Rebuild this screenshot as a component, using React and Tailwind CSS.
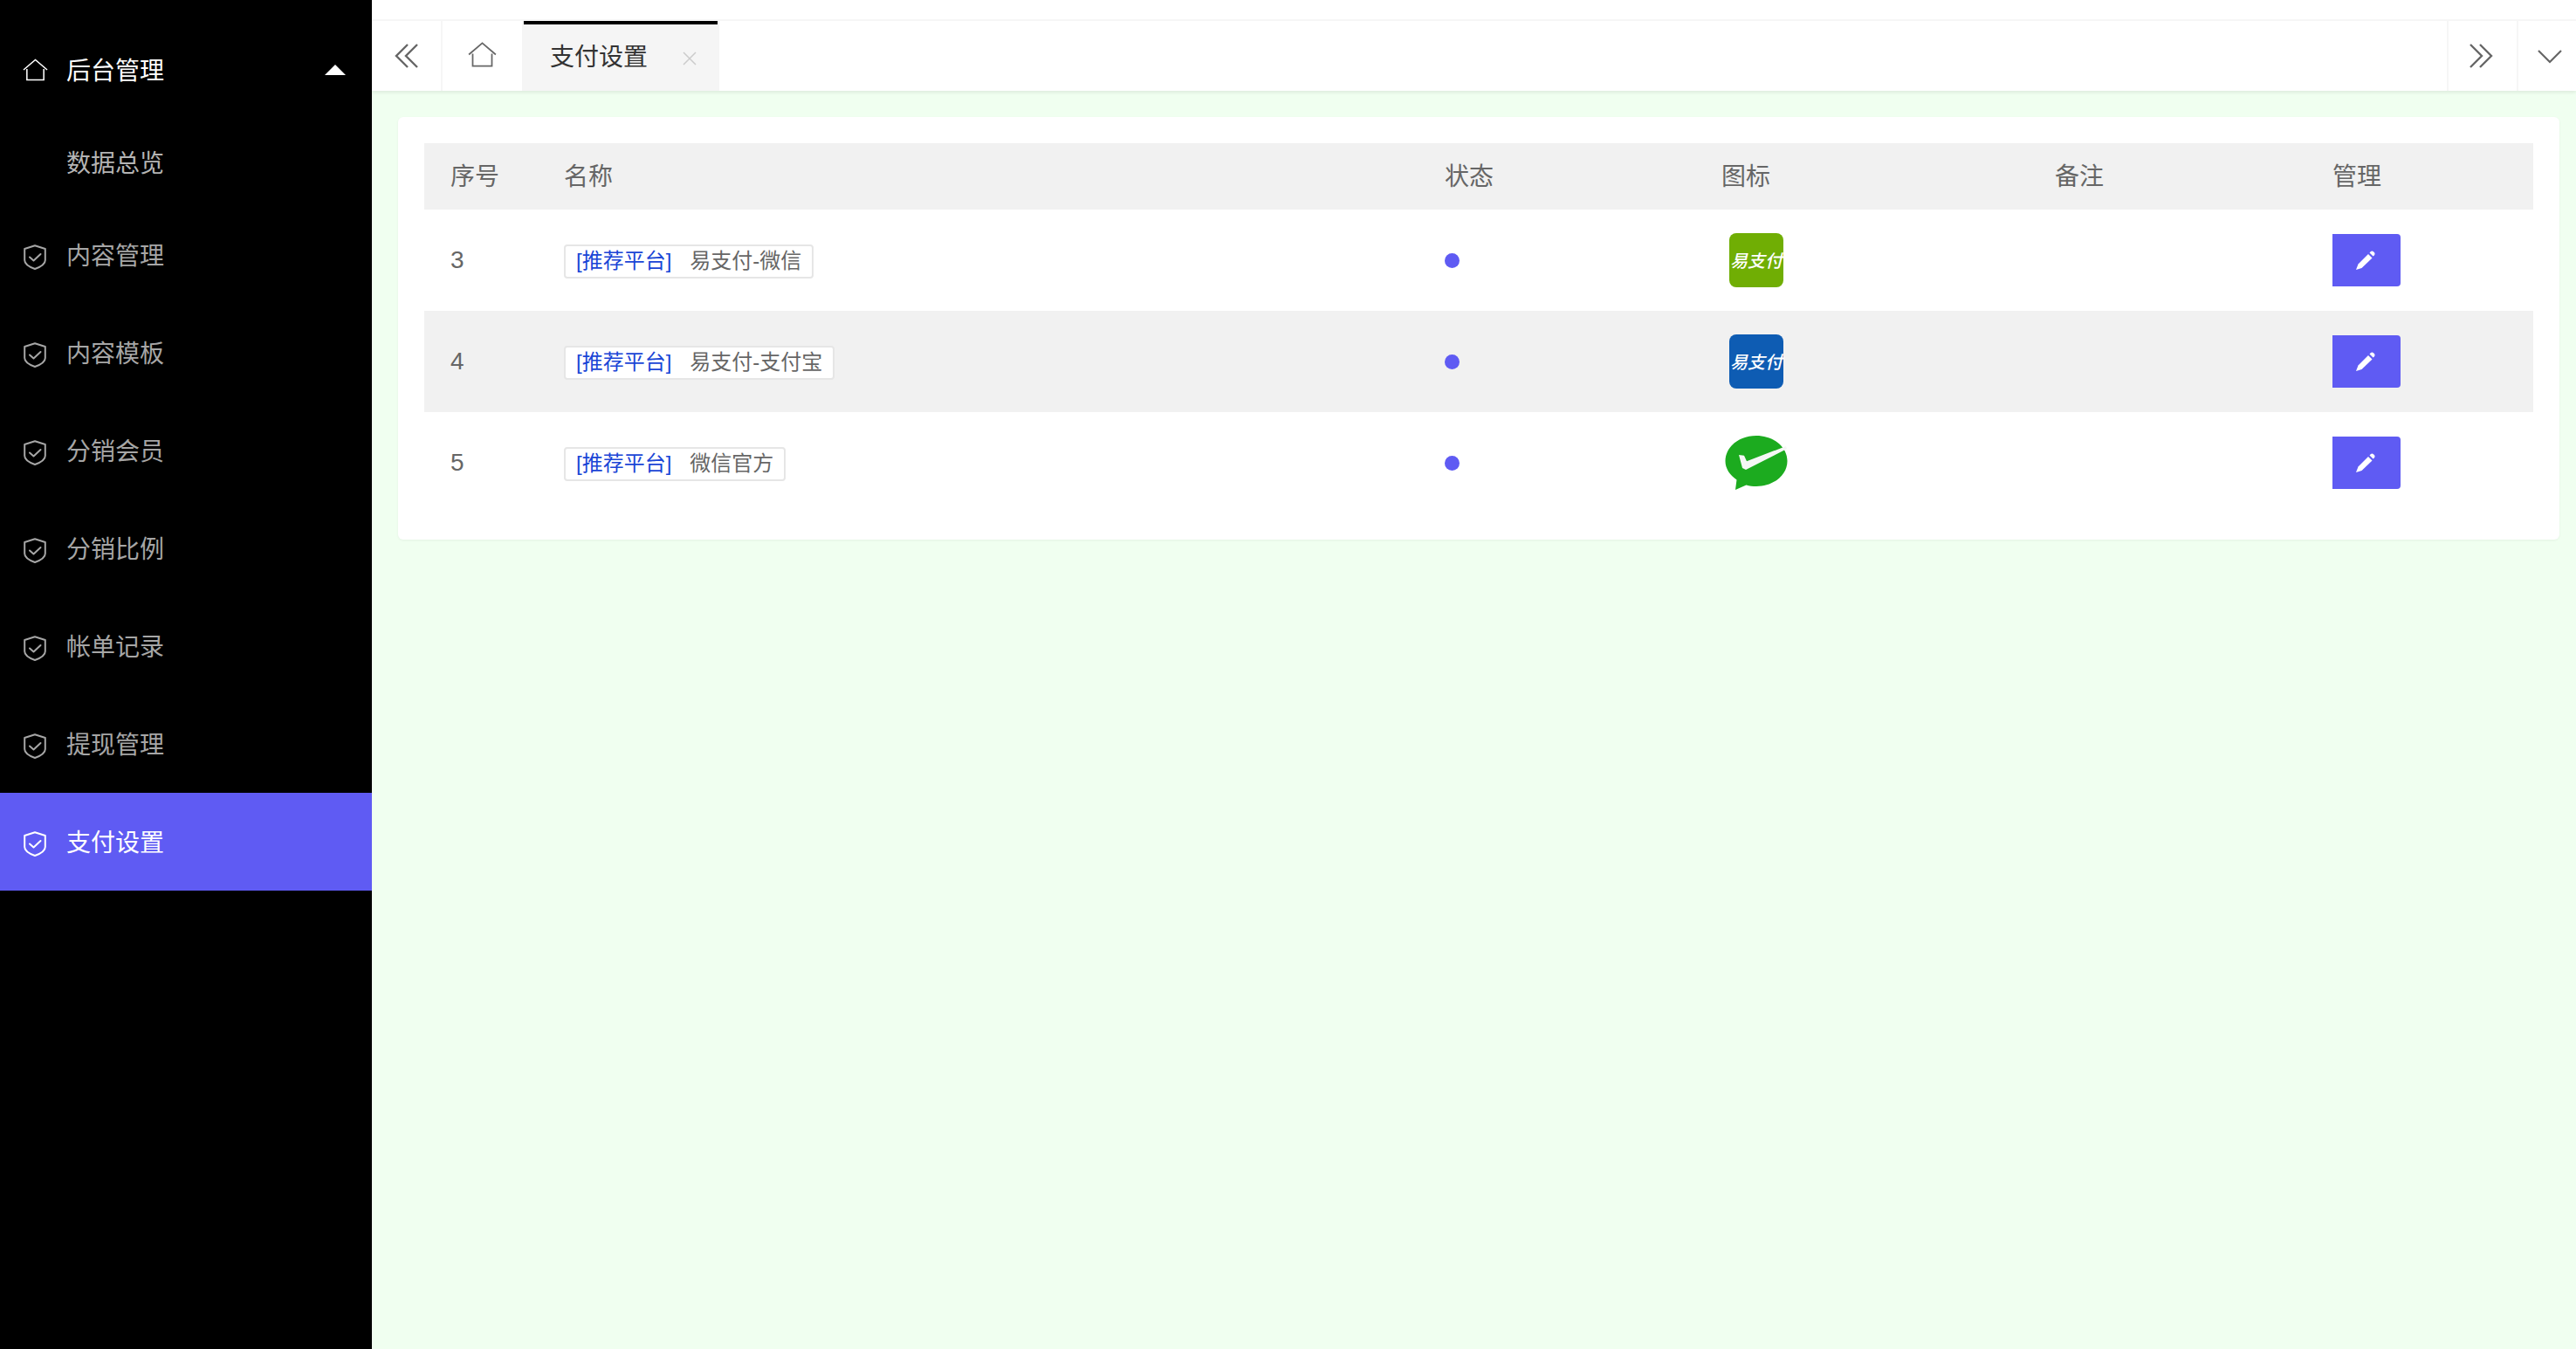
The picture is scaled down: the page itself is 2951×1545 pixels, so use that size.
import React from 'react';

const FONT = { fontFamily: '"Liberation Sans", "Noto Sans CJK SC", sans-serif' };

const HomeIcon = ({ className }) => (
  <svg viewBox="0 0 30 26" fill="none" stroke="currentColor" strokeWidth="1.6" className={className}>
    <path d="M1 13 15 1l14 12" />
    <path d="M5 12v13h20V12" />
  </svg>
);

const ShieldIcon = ({ className }) => (
  <svg viewBox="0 0 26 29" fill="none" stroke="currentColor" strokeWidth="2" className={className}>
    <path d="M13 1.2 24.8 5v13c0 4-5 7.600-11.800 10C6.200 25.600 1.200 22 1.200 18V5z" strokeLinejoin="round" />
    <path d="m7 14.500 4.500 4 8-7.500" strokeLinecap="round" strokeLinejoin="round" />
  </svg>
);

const DoubleChevron = ({ className, flip }) => (
  <svg viewBox="0 0 28 28" fill="none" stroke="currentColor" strokeWidth="2.4" className={className}>
    {flip ? <path d="M2 1l13 13L2 27M13 1l13 13-13 13" /> : <path d="M15 1 2 14l13 13M26 1 13 14l13 13" />}
  </svg>
);

// 메뉴 목록
const menus = ['内容管理', '内容模板', '分销会员', '分销比例', '帐单记录', '提现管理'];

const Sidebar = () => (
  <aside className="w-[426px] shrink-0 bg-black pt-6 text-[28px]">
    <div className="flex h-[112px] items-center pl-[26px] pr-[30px] text-white">
      <HomeIcon className="h-[26px] w-[29px] shrink-0" />
      <span className="mt-[4px] ml-[21px]">后台管理</span>
      <span className="ml-auto h-0 w-0 border-x-[12px] border-b-[12px] border-x-transparent border-b-white" />
    </div>
    <div className="flex h-[100px] items-center pt-[3px] pl-[76px] text-[#b4b4b4]">数据总览</div>
    {menus.map((name) => (
      <div key={name} className="flex h-[112px] items-center pt-[4px] pl-[27px] text-[#a6a6a6]">
        <ShieldIcon className="h-[29px] w-[26px] shrink-0" />
        <span className="-mt-[1px] ml-[23px]">{name}</span>
      </div>
    ))}
    <div className="flex h-[112px] items-center bg-[#5f5bf3] pt-[4px] pl-[27px] text-white">
      <ShieldIcon className="h-[29px] w-[26px] shrink-0" />
      <span className="-mt-[1px] ml-[23px]">支付设置</span>
    </div>
  </aside>
);

const TabBar = () => (
  <header className="relative shrink-0 bg-white shadow-[0_2px_4px_rgba(0,0,0,0.08)]">
    <div className="h-[24px] border-b-2 border-[#f6f6f6]" />
    <div className="flex h-[80px] items-stretch text-[#666]">
      <div className="flex w-[81px] items-center justify-center border-r-2 border-[#f6f6f6]">
        <DoubleChevron className="h-[28px] w-[28px]" />
      </div>
      <div className="flex w-[91px] items-center justify-center">
        <HomeIcon className="mb-[3px] h-[29px] w-[33px]" />
      </div>
      <div className="relative flex w-[226px] items-center bg-[#f5f5f5] pt-[3px] pl-[32px] text-[28px] text-[#333]">
        <span className="absolute inset-x-[2px] top-0 h-[4px] bg-black" />
        支付设置
        <svg viewBox="0 0 16 16" stroke="#ccc" strokeWidth="1.500" className="mt-[2px] ml-[40px] h-[16px] w-[16px]">
          <path d="m1 1 14 14M15 1 1 15" />
        </svg>
      </div>
      <div className="ml-auto flex w-[80px] items-center justify-center border-l-2 border-[#f6f6f6] pr-[4px]">
        <DoubleChevron flip className="h-[28px] w-[28px]" />
      </div>
      <div className="flex w-[68px] items-center justify-center border-l-2 border-[#f6f6f6] pl-[6px]">
        <svg viewBox="0 0 28 16" fill="none" stroke="currentColor" strokeWidth="2.200" className="mt-[2px] h-[16px] w-[28px]">
          <path d="m1 1 13 13L27 1" />
        </svg>
      </div>
    </div>
  </header>
);

const PayLogo = ({ color }) => (
  <div className="ml-[9px] flex h-[62px] w-[62px] items-center justify-center rounded-[8px] pt-[2px] text-[20px] font-medium whitespace-nowrap text-white italic" style={{ backgroundColor: color }}>
    易支付
  </div>
);

const WechatLogo = () => (
  <svg viewBox="0 0 72 62" className="ml-[4px] h-[62px] w-[72px]">
    <path d="M36 0c20 0 35.500 13 35.500 29S56 58 36 58c-4 0-8-.6-11.500-1.600L12 62l1.500-11.500C5.500 45 .5 37.500.5 29 .5 13 16 0 36 0z" fill="#1cab1f" />
    <path d="M16 22l6 .8 3 6.500L70 12l1 3-47 24-4-2z" fill="#f5f7f5" />
  </svg>
);

const rows = [
  { id: 3, name: '易支付-微信', logo: <PayLogo color="#70ae04" /> },
  { id: 4, name: '易支付-支付宝', logo: <PayLogo color="#0e5cb3" /> },
  { id: 5, name: '微信官方', logo: <WechatLogo /> },
];

const PayTable = () => (
  <table className="w-full table-fixed border-collapse text-[#666]">
    <thead>
      <tr className="h-[76px] bg-[#f1f1f1] text-left text-[28px]">
        <th className="w-[131px] pt-[2px] pl-[30px] font-normal">序号</th>
        <th className="w-[1009px] pt-[2px] pl-[29px] font-normal">名称</th>
        <th className="w-[316px] pt-[2px] pl-[29px] font-normal">状态</th>
        <th className="w-[382px] pt-[2px] pl-[30px] font-normal">图标</th>
        <th className="w-[319px] pt-[2px] pl-[30px] font-normal">备注</th>
        <th className="pt-[2px] pl-[29px] font-normal">管理</th>
      </tr>
    </thead>
    <tbody>
      {rows.map((row, i) => (
        <tr key={row.id} className={i === 1 ? 'h-[116px] bg-[#f1f1f1]' : 'h-[116px]'}>
          <td className="pl-[30px] text-[28px]">{row.id}</td>
          <td className="pt-[2px] pl-[29px]">
            <span className="inline-flex h-[39px] items-center rounded-[4px] border-2 border-[#e6e6e6] bg-white px-[12px] text-[24px] whitespace-nowrap">
              <span className="text-[#1a45d6]">[推荐平台]</span>
              <span className="ml-[21px]">{row.name}</span>
            </span>
          </td>
          <td className="pl-[29px]">
            <span className="block h-[17px] w-[17px] rounded-full bg-[#5f5bf3]" />
          </td>
          <td className="pl-[30px]">{row.logo}</td>
          <td className="pl-[30px]" />
          <td className="pl-[29px]">
            <button className="flex h-[60px] w-[78px] items-center justify-center rounded-r-[4px] bg-[#5f5bf3] pr-[3px]">
              <svg viewBox="0 0 22 22" fill="white" className="h-[22px] w-[22px]">
                <path d="M0 22l2.500-6.500L14 4l4.500 4.500L6.500 20z" />
                <path d="M15.500 2.500l1.200-1.200c1-1 2.300-1 3.300 0l.8.8c1 1 1 2.300 0 3.300L19.600 6.600z" />
              </svg>
            </button>
          </td>
        </tr>
      ))}
    </tbody>
  </table>
);

export default function App() {
  return (
    <div className="flex h-[1545px] w-[2951px] overflow-hidden bg-[#f0fff0]" style={FONT}>
      <Sidebar />
      <div className="flex min-w-0 flex-1 flex-col">
        <TabBar />
        <main className="pt-[30px] pr-[19px] pl-[30px]">
          <div className="rounded-[6px] bg-white p-[30px] shadow-[0_1px_3px_rgba(0,0,0,0.05)]">
            <PayTable />
          </div>
        </main>
      </div>
    </div>
  );
}
